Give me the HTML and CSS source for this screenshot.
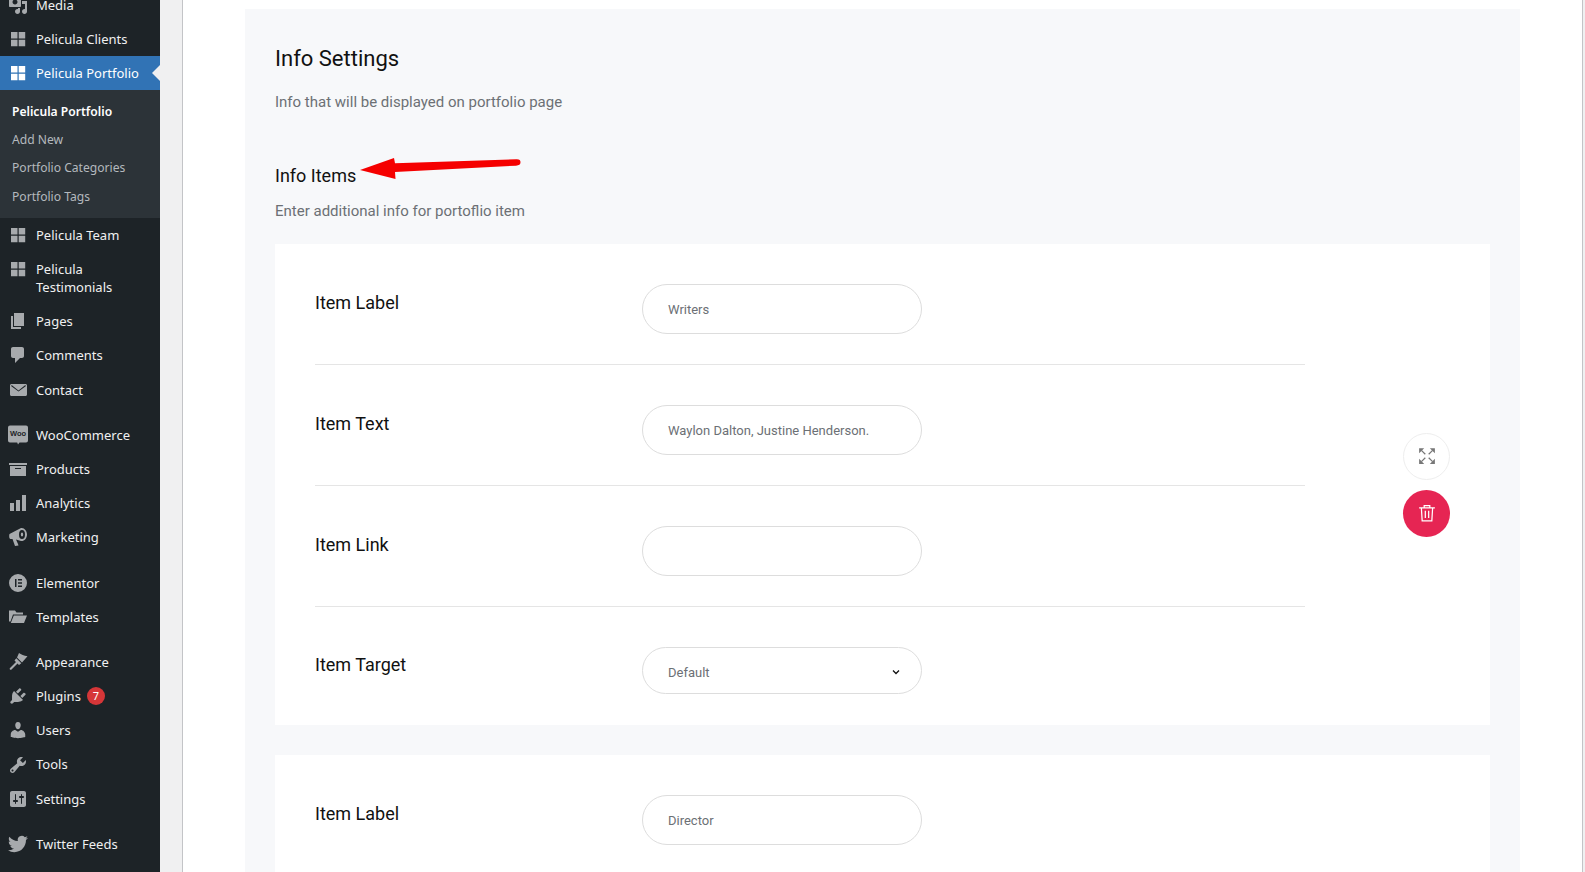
FILE: index.html
```html
<!DOCTYPE html>
<html lang="en">
<head>
<meta charset="utf-8">
<title>Pelicula Portfolio</title>
<link rel="stylesheet" href="styles.css">
</head>
<body>
<div class="app">
  <nav class="sidebar">
    <ul class="menu">
      <li class="item"><svg class="ico" viewBox="0 0 20 20"><path d="M13 11V4c0-.55-.45-1-1-1h-1.670L9 1H5L3.670 3H2c-.55 0-1 .45-1 1v7c0 .55.45 1 1 1h10c.55 0 1-.45 1-1zM7 4.500c1.380 0 2.500 1.120 2.500 2.500S8.380 9.500 7 9.500 4.500 8.380 4.500 7 5.620 4.500 7 4.500zM14 6h5v10.500c0 1.380-1.120 2.500-2.500 2.500S14 17.880 14 16.500s1.120-2.500 2.500-2.500c.17 0 .34.020.5.050V9h-3V6zm-4 8.050V13h2v3.500c0 1.380-1.120 2.500-2.500 2.500S7 17.880 7 16.500 8.120 14 9.500 14c.17 0 .34.020.5.050z"/></svg><span>Media</span></li>
      <li class="item"><svg class="ico" viewBox="0 0 20 20"><path d="M3 3h6.500v6.500H3zM10.700 3h6.500v6.500h-6.500zM3 10.700h6.500v6.500H3zM10.700 10.700h6.500v6.500h-6.500z"/></svg><span>Pelicula Clients</span></li>
      <li class="item active"><svg class="ico" viewBox="0 0 20 20"><path d="M3 3h6.500v6.500H3zM10.700 3h6.500v6.500h-6.500zM3 10.700h6.500v6.500H3zM10.700 10.700h6.500v6.500h-6.500z"/></svg><span>Pelicula Portfolio</span></li>
      <li class="submenu">
        <a class="sub current">Pelicula Portfolio</a>
        <a class="sub">Add New</a>
        <a class="sub">Portfolio Categories</a>
        <a class="sub">Portfolio Tags</a>
      </li>
      <li class="item"><svg class="ico" viewBox="0 0 20 20"><path d="M3 3h6.500v6.500H3zM10.700 3h6.500v6.500h-6.500zM3 10.700h6.500v6.500H3zM10.700 10.700h6.500v6.500h-6.500z"/></svg><span>Pelicula Team</span></li>
      <li class="item tall"><svg class="ico" viewBox="0 0 20 20"><path d="M3 3h6.500v6.500H3zM10.700 3h6.500v6.500h-6.500zM3 10.700h6.500v6.500H3zM10.700 10.700h6.500v6.500h-6.500z"/></svg><span>Pelicula Testimonials</span></li>
      <li class="item"><svg class="ico" viewBox="0 0 20 20"><path d="M6 15V2h10v13H6zm-1 1h8v2H3V5h2v11z"/></svg><span>Pages</span></li>
      <li class="item"><svg class="ico" viewBox="0 0 20 20"><path d="M5 2h9c1.100 0 2 .9 2 2v7c0 1.100-.9 2-2 2h-2l-5 5v-5H5c-1.100 0-2-.9-2-2V4c0-1.100.9-2 2-2z"/></svg><span>Comments</span></li>
      <li class="item"><svg class="ico" viewBox="0 0 20 20"><path d="M19 14.500v-9c0-.83-.67-1.500-1.500-1.500H3.490c-.83 0-1.500.67-1.500 1.500v9c0 .83.67 1.500 1.500 1.500H17.500c.83 0 1.500-.67 1.500-1.500zm-1.310-9.110c.33.33.15.67-.03.84L10.500 11.600 3.330 6.230c-.18-.17-.36-.51-.03-.84s.67-.17.95.07l6.240 5.040 6.250-5.040c.28-.24.62-.4.95-.07z"/></svg><span>Contact</span></li>
      <li class="gap"></li>
      <li class="item"><svg class="ico" viewBox="0 0 20 20"><path d="M2 .5h16a2 2 0 0 1 2 2v13a2 2 0 0 1-2 2h-6.500l-1.500 2-.8-2H2a2 2 0 0 1-2-2v-13a2 2 0 0 1 2-2z"/><text class="woo" x="10" y="11" text-anchor="middle">Woo</text></svg><span>WooCommerce</span></li>
      <li class="item"><svg class="ico" viewBox="0 0 20 20"><path d="M19 4v2H1V4h18zM2 7h16v10H2V7zm11 3V9H7v1h6z"/></svg><span>Products</span></li>
      <li class="item"><svg class="ico" viewBox="0 0 20 20"><path d="M18 18V2h-4v16h4zm-6 0V7H8v11h4zm-6 0v-8H2v8h4z"/></svg><span>Analytics</span></li>
      <li class="item"><svg class="ico" viewBox="0 0 20 20"><path fill-rule="evenodd" d="M1.500 7 13 1c3-.7 6 2.500 6 6.500s-3 7-6 6.500l-5-1.500 2 4.500.5 1.500L7 19l-2.500-7h-2C1 12 1 8 1.500 7zM14 3a3 4.500 0 1 0 0 9 3 4.500 0 0 0 0-9zm0 2.500a1.200 2 0 1 1 0 4 1.200 2 0 0 1 0-4z"/></svg><span>Marketing</span></li>
      <li class="gap"></li>
      <li class="item"><svg class="ico" viewBox="0 0 20 20"><path fill-rule="evenodd" d="M10 1a9 9 0 1 1 0 18 9 9 0 0 1 0-18zM7 6v8h1.500V6zm3 0v1.500h4V6zm0 3.200v1.500h4V9.200zm0 3.300V14h4v-1.500z"/></svg><span>Elementor</span></li>
      <li class="item"><svg class="ico" viewBox="0 0 20 20"><path d="M1 14.500V3.500h6l1.500 2H15v2H5L2.500 14.500zM5.800 8.500H19L16 16H2.800z"/></svg><span>Templates</span></li>
      <li class="gap"></li>
      <li class="item"><svg class="ico" viewBox="0 0 20 20"><path d="M11 1c2 1.500 5 3 8.500 3.300L14 10.500 9 5.500zM8.300 6.300l5 5L11 13l-1.500-1.500-6 6c-1 1-2.500-.5-1.500-1.500l6-6-1.500-1.500z"/></svg><span>Appearance</span></li>
      <li class="item"><svg class="ico" viewBox="0 0 20 20"><path d="M13.110 4.360L9.870 7.600 8 5.730l3.240-3.240c.35-.34 1.050-.2 1.560.32.520.51.660 1.210.310 1.550zm-8 1.770l.91-1.120 9.010 9.010-1.190.84c-.71.71-2.630 1.160-3.820 1.160H6.140L4.900 17.260c-.59.59-1.540.59-2.120 0-.59-.58-.59-1.530 0-2.120l1.240-1.240v-3.880c0-1.130.4-3.190 1.090-3.890zm7.260 3.970l3.240-3.240c.34-.35 1.040-.21 1.550.31.520.51.660 1.210.310 1.550l-3.240 3.250z"/></svg><span>Plugins</span><b class="badge">7</b></li>
      <li class="item"><svg class="ico" viewBox="0 0 20 20"><path d="M10 9.250c-2.270 0-2.730-3.440-2.730-3.440C7 4.020 7.820 2 9.970 2c2.160 0 2.980 2.020 2.710 3.810 0 0-.41 3.440-2.680 3.440zm0 2.570L12.720 10c2.390 0 4.520 2.330 4.520 4.530v2.490s-3.650 1.130-7.240 1.130c-3.650 0-7.240-1.130-7.240-1.130v-2.490c0-2.250 1.940-4.480 4.470-4.480z"/></svg><span>Users</span></li>
      <li class="item"><svg class="ico" viewBox="0 0 20 20"><path d="M16.680 9.770c-1.340 1.340-3.300 1.670-4.950.99l-5.410 6.520c-.99.99-2.590.99-3.580 0s-.99-2.590 0-3.570l6.520-5.420c-.68-1.650-.35-3.610.99-4.950 1.280-1.280 3.120-1.620 4.720-1.060l-2.890 2.890 2.820 2.820 2.860-2.870c.53 1.580.18 3.390-1.080 4.670zM3.810 16.210c.4.39 1.040.39 1.430 0 .4-.4.4-1.040 0-1.430-.39-.4-1.030-.4-1.430 0-.39.39-.39 1.030 0 1.430z"/></svg><span>Tools</span></li>
      <li class="item"><svg class="ico" viewBox="0 0 20 20"><path d="M18 16V4c0-1.100-.9-2-2-2H4c-1.100 0-2 .9-2 2v12c0 1.100.9 2 2 2h12c1.100 0 2-.9 2-2zM8 11h1c.55 0 1 .45 1 1s-.45 1-1 1H8v1.500c0 .28-.22.5-.5.5s-.5-.22-.5-.5V13H6c-.55 0-1-.45-1-1s.45-1 1-1h1V5.500c0-.28.22-.5.5-.5s.5.22.5.5V11zm5-2h-1c-.55 0-1-.45-1-1s.45-1 1-1h1V5.500c0-.28.22-.5.5-.5s.5.22.5.5V7h1c.55 0 1 .45 1 1s-.45 1-1 1h-1v5.500c0 .28-.22.5-.5.5s-.5-.22-.5-.5V9z"/></svg><span>Settings</span></li>
      <li class="gap"></li>
      <li class="item"><svg class="ico" viewBox="0 0 24 24"><path d="M23.953 4.570a10 10 0 01-2.825.775 4.958 4.958 0 002.163-2.723c-.951.555-2.005.959-3.127 1.184a4.920 4.920 0 00-8.384 4.482C7.690 8.095 4.067 6.130 1.640 3.162a4.822 4.822 0 00-.666 2.475c0 1.710.870 3.213 2.188 4.096a4.904 4.904 0 01-2.228-.616v.06a4.923 4.923 0 003.946 4.827 4.996 4.996 0 01-2.212.085 4.936 4.936 0 004.604 3.417 9.867 9.867 0 01-6.102 2.105c-.39 0-.779-.023-1.170-.067a13.995 13.995 0 007.557 2.209c9.053 0 13.998-7.496 13.998-13.985 0-.21 0-.42-.015-.63A9.935 9.935 0 0024 4.590z"/></svg><span>Twitter Feeds</span></li>
    </ul>
  </nav>
  <main class="main">
    <div class="content">
      <section class="panel">
        <svg class="arrow" viewBox="0 0 165 24" aria-hidden="true"><path d="M0 13 34 1l1 5.300L156 2.300c3.500-.2 4.500.8 4.500 3s-1.500 3.100-4.500 3.400L35 15l.5 7z"/></svg>
        <h2 class="title">Info Settings</h2>
        <p class="desc">Info that will be displayed on portfolio page</p>
        <h3 class="subtitle">Info Items</h3>
        <p class="desc desc-items">Enter additional info for portoflio item</p>
        <div class="card">
          <div class="fields">
            <div class="row"><label class="label">Item Label</label><div class="field">Writers</div></div>
            <div class="row"><label class="label">Item Text</label><div class="field">Waylon Dalton, Justine Henderson.</div></div>
            <div class="row"><label class="label">Item Link</label><div class="field"></div></div>
            <div class="row"><label class="label label-select">Item Target</label><div class="field select"><span>Default</span><svg class="chev" viewBox="0 0 10 10"><path d="M2 3.500 5 6.500l3-3"/></svg></div></div>
          </div>
          <div class="actions">
            <button class="round expand"><svg viewBox="0 0 16 16"><path class="shaft" d="M3 3l3.500 3.500M13 3 9.500 6.500M3 13l3.500-3.500M13 13 9.500 9.500"/><path d="M1 1h4.500L1 5.500zM15 1v4.500L10.500 1zM1 15v-4.500L5.500 15zM15 15h-4.500L15 10.500z"/></svg></button>
            <button class="round trash"><svg viewBox="0 0 16 16"><path d="M1 3.500h14M5.500 3.500V1.500h5v2M3 3.500l.7 11.500h8.600L13 3.500M6.500 6v6.500M9.500 6v6.500"/></svg></button>
          </div>
        </div>
        <div class="card">
          <div class="fields">
            <div class="row"><label class="label">Item Label</label><div class="field">Director</div></div>
          </div>
        </div>
      </section>
    </div>
  </main>
</div>
</body>
</html>
```
FILE: styles.css
```css
* { box-sizing: border-box; }
html, body { margin: 0; height: 100%; overflow: hidden; }
body { background: #f0f0f1; font-family: "Roboto", sans-serif; }
.app { display: flex; height: 872px; overflow: hidden; }

.sidebar { width: 160px; flex: none; background: #1d2327; overflow: hidden; }
.menu { list-style: none; margin: -12.4px 0 0; padding: 0; font-family: "Noto Sans", sans-serif; font-size: 13px; color: #f0f0f1; }
.item { position: relative; display: flex; align-items: center; min-height: 34.2px; padding: 0 8px 0 36px; line-height: 18.2px; }
.item.tall { align-items: flex-start; padding-top: 8px; padding-bottom: 8px; min-height: 52.4px; line-height: 18px; }
.ico { position: absolute; left: 8px; top: 7px; width: 20px; height: 20px; fill: #a7aaad; }
.woo { font: 700 7.5px "Liberation Sans", sans-serif; fill: #1d2327; }
.item.active { background: #3173b5; color: #fff; }
.item.active .ico { fill: #fff; }
.item.active::after { content: ""; position: absolute; right: 0; top: 50%; margin-top: -8px; border: 8px solid transparent; border-right-color: #f0f0f1; border-left-width: 0; }
.gap { height: 11px; }
.submenu { background: #2c3338; padding: 7px 0 6.5px; display: flex; flex-direction: column; }
.sub { display: block; height: 28.5px; line-height: 28px; padding-left: 12px; font-size: 12.1px; color: #b4b9be; }
.sub.current { color: #fff; font-weight: 600; line-height: 30px; }
.badge { margin-left: 6px; width: 18px; height: 18px; border-radius: 50%; background: #d63638; color: #fff; font-size: 11px; font-weight: 400; line-height: 18px; text-align: center; }

.main { flex: 1; min-width: 0; padding: 0 2px 0 22px; }
.content { height: 100%; background: #fff; border-left: 1px solid #c3c4c7; border-right: 1px solid #c3c4c7; padding: 9px 62px 0; }

.panel { position: relative; background: #f7f8fa; padding: 32px 30px 0; min-height: 900px; }
.arrow { position: absolute; left: 115px; top: 148px; width: 165px; height: 24px; fill: #f50000; }
.title { margin: 0; font-size: 22px; font-weight: 400; line-height: 36px; color: #111; }
.desc { margin: 13px 0 0; font-size: 15px; line-height: 24px; color: #6c7075; }
.subtitle { margin: 50px 0 0; font-size: 18px; font-weight: 400; line-height: 24px; color: #111; }
.desc-items { margin-top: 11px; }
.card { display: flex; align-items: center; justify-content: space-between; background: #fff; padding: 0 40px; margin-top: 30px; }
.desc-items + .card { margin-top: 21px; }
.fields { width: 990px; }
.row { display: flex; padding: 40px 0 30px; border-bottom: 1px solid #e5e5e5; }
.row:last-child { border-bottom: 0; padding-bottom: 31px; }
.label { width: 327px; flex: none; font-size: 18px; line-height: 38px; color: #111; }
.label-select { line-height: 36px; }
.field { display: flex; align-items: center; justify-content: space-between; width: 280px; height: 50px; padding: 0 25px; border: 1px solid #ddd; border-radius: 25px; background: #fff; font-size: 13px; color: #6c7075; }
.select { height: 47px; padding: 3px 20px 0 25px; }
.chev { width: 10px; height: 10px; fill: none; stroke: #111; stroke-width: 1.3; }
.actions { display: flex; flex-direction: column; gap: 10px; }
.round { display: flex; align-items: center; justify-content: center; width: 47px; height: 47px; padding: 0; border-radius: 50%; }
.round svg { width: 18px; height: 18px; }
.expand { background: #fff; border: 1px solid #eee; fill: #777; }
.shaft { fill: none; stroke: #777; stroke-width: 1.1; }
.trash { background: #e62553; border: 0; fill: none; stroke: #fff; stroke-width: 1.1; }
```
